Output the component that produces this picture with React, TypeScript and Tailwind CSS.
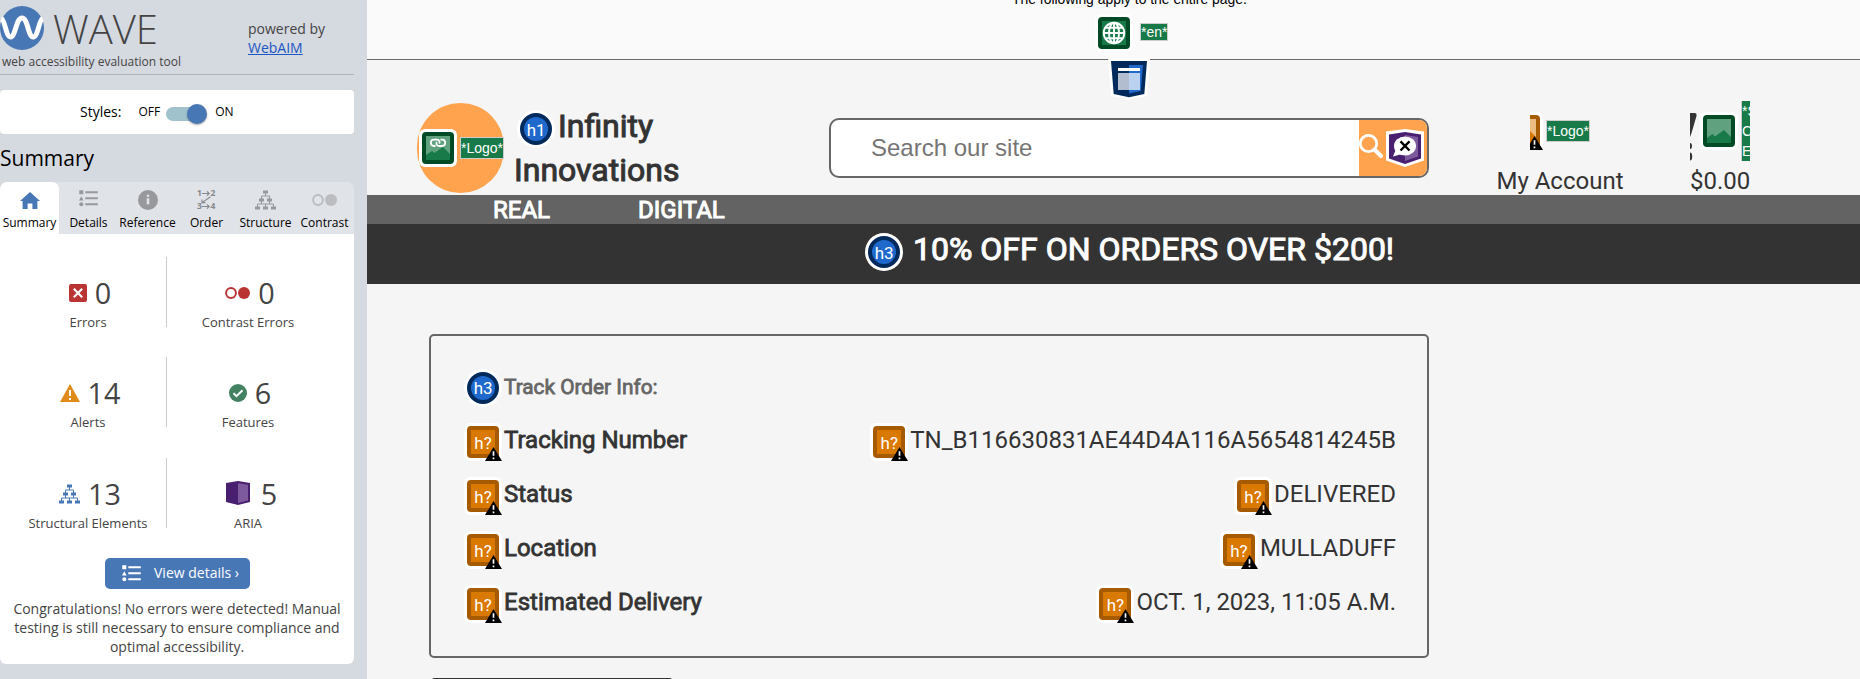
import type { ReactNode } from "react";

/* ---------- shared marker pieces ---------- */

function WarningCorner() {
  return (
    <svg className="absolute right-0 bottom-0 h-[14px] w-[17px]" viewBox="0 0 17 14">
      <path d="M8.5 0L17 14H0z" fill="#000" />
      <path d="M8.5 4.2v4.6M8.5 10.4v1.8" stroke="#fff" strokeWidth="1.7" />
    </svg>
  );
}

function HeadingBadge({ label }: { label: string }) {
  return (
    <div className="size-[38px] shrink-0 rounded-full bg-white p-[3px]">
      <div className="flex size-8 items-center justify-center rounded-full border-4 border-[#002a5c] bg-[#1f69cc] pt-[2px] text-[17px] leading-none font-normal tracking-[-0.3px] text-white [-webkit-text-stroke-width:0px]">
        {label}
      </div>
    </div>
  );
}

function PossibleHeading() {
  return (
    <div className="relative size-[38px] shrink-0 translate-y-[2px] rounded-[6px] bg-white p-[3px]">
      <div className="flex size-8 items-center justify-center rounded-[4px] border-4 border-[#a65b00] bg-[#da7900] pt-[2px] text-[17px] leading-none font-normal text-white [-webkit-text-stroke-width:0px]">
        h?
      </div>
      <WarningCorner />
    </div>
  );
}

function GreenBadge({ children }: { children: ReactNode }) {
  return (
    <div className="size-[38px] shrink-0 rounded-[6px] bg-white p-[3px]">
      <div className="size-8 rounded-[4px] border-4 border-[#004a26] bg-[#177a48]">
        <svg className="size-6" viewBox="0 0 24 24">
          {children}
        </svg>
      </div>
    </div>
  );
}

function AltLabel({ children }: { children: ReactNode }) {
  return (
    <span className="shrink-0 border border-[#ccc] bg-[#177a48] font-['Liberation_Sans',sans-serif] text-sm leading-5 whitespace-nowrap text-white">
      {children}
    </span>
  );
}

/* ---------- sidebar icons ---------- */

function ListIcon({ className }: { className: string }) {
  return (
    <svg className={className} viewBox="0 0 19 17" fill="currentColor">
      <path d="M.3.2h4v4h-4zM2.3 6.2l2.3 4.3H0z" />
      <circle cx="2.3" cy="14.3" r="2" />
      <path d="M6.3 1.2h12.5v2H6.3zM6.3 7.2h12.5v2H6.3zM6.3 13.2h12.5v2H6.3z" />
    </svg>
  );
}

function TreeIcon({ className }: { className: string }) {
  return (
    <svg className={className} viewBox="0 0 21 20">
      <path
        d="M8 .5h5v3H8zM4 8.5h5v3H4zM12 8.5h5v3h-5zM0 16.5h5v3H0zM8 16.5h5v3H8zM16 16.5h5v3h-5z"
        fill="currentColor"
      />
      <path
        d="M10.5 3v3M6.5 9V6h8v3M6.5 11v3M14.5 11v3M2.5 17v-3h16v3M10.5 14v3"
        fill="none"
        stroke="currentColor"
        strokeWidth="1"
      />
    </svg>
  );
}

function CirclesIcon({ className }: { className: string }) {
  return (
    <svg className={className} viewBox="0 0 25 12">
      <circle cx="6" cy="6" r="4.9" fill="none" stroke="currentColor" strokeWidth="2" />
      <circle cx="19" cy="6" r="6" fill="currentColor" />
    </svg>
  );
}

function OrderIcon() {
  return (
    <svg className="h-5 w-[19px]" viewBox="0 0 19 20">
      <g
        fill="currentColor"
        fontFamily="Open Sans, sans-serif"
        fontSize="8.5"
        fontWeight="700"
      >
        <text x="0" y="6.4">1</text>
        <text x="13.5" y="6.4">2</text>
        <text x="0" y="19.4">3</text>
        <text x="13.5" y="19.4">4</text>
      </g>
      <path
        d="M5 3.5h7M10 1.3l2.2 2.2L10 5.7M5 16.5h7M10 14.3l2.2 2.2-2.2 2.2M13.5 6.8L5 12.6M5 9.4v3.2h3.4"
        fill="none"
        stroke="currentColor"
        strokeWidth="1.1"
      />
    </svg>
  );
}

const tabs = [
  {
    name: "Summary",
    icon: (
      <svg className="h-[17px] w-[20px] text-[#4877b6]" viewBox="0 0 20 17" fill="currentColor">
        <path d="M10 0L0 9h2.6v8h5v-5.5h4.8V17h5V9H20z" />
      </svg>
    ),
  },
  { name: "Details", icon: <ListIcon className="mb-1 h-[17px] w-[19px] text-[#97999c]" /> },
  {
    name: "Reference",
    icon: (
      <svg className="size-5" viewBox="0 0 20 20">
        <circle cx="10" cy="10" r="10" fill="#97999c" />
        <circle cx="10" cy="5.8" r="1.3" fill="#e0e3e8" />
        <path d="M8.7 8.3h2.6v6H8.7z" fill="#e0e3e8" />
      </svg>
    ),
  },
  { name: "Order", icon: <span className="text-[#85888b]"><OrderIcon /></span> },
  { name: "Structure", icon: <TreeIcon className="h-5 w-[21px] text-[#97999c]" /> },
  { name: "Contrast", icon: <CirclesIcon className="h-3 w-[25px] text-[#bbbdc1]" /> },
];

const stats = [
  {
    name: "Errors",
    count: 0,
    icon: (
      <svg className="size-[18px]" viewBox="0 0 18 18">
        <rect width="18" height="18" rx="2" fill="#ba3434" />
        <path d="M4.8 4.8l8.4 8.4M13.2 4.8l-8.4 8.4" stroke="#fff" strokeWidth="2.1" />
      </svg>
    ),
  },
  { name: "Contrast Errors", count: 0, icon: <CirclesIcon className="h-3 w-[25px] text-[#ba3434]" /> },
  {
    name: "Alerts",
    count: 14,
    icon: (
      <svg className="h-[18px] w-5" viewBox="0 0 20 18">
        <path d="M10 0l10 18H0z" fill="#e18b1b" />
        <path d="M10 6v6M10 14v2" stroke="#fff" strokeWidth="2" />
      </svg>
    ),
  },
  {
    name: "Features",
    count: 6,
    icon: (
      <svg className="size-[18px]" viewBox="0 0 18 18">
        <circle cx="9" cy="9" r="9" fill="#438261" />
        <path d="M4.5 9.2l3 3 6-6" fill="none" stroke="#fff" strokeWidth="2" />
      </svg>
    ),
  },
  { name: "Structural Elements", count: 13, icon: <TreeIcon className="h-5 w-[21px] text-[#4877b6]" /> },
  {
    name: "ARIA",
    count: 5,
    icon: (
      <svg className="mr-[3px] mb-[2px] ml-[3px] h-6 w-6" viewBox="0 0 24 24">
        <path d="M12 0l12 2v19l-12 3L0 21V2z" fill="#48206f" />
        <path d="M12 2.2l10 1.6v15.6l-10 2.5z" fill="#7d5a9e" />
      </svg>
    ),
  },
];

function Sidebar() {
  return (
    <aside className="h-full w-[367px] shrink-0 bg-[#d5d9e0] pr-[13px] font-['Open_Sans',sans-serif] text-[#444]">
      <header className="flex h-[75px] border-b border-[#b1b5bb]">
        <div className="w-[248px]">
          <div className="flex h-[54px] pt-[6px]">
            <svg className="size-[44px]" viewBox="0 0 44 44">
              <circle cx="22" cy="22" r="22" fill="#4877b6" />
              <path
                d="M1.5 12.5C5 14 6 31 10.5 31C15.5 31 16 12 22 12S28 31 33.2 31C38 31 39 14 42.5 12.5"
                fill="none"
                stroke="#fff"
                strokeWidth="5"
              />
            </svg>
            <span className="pt-[3px] pl-[9px] text-[40px] leading-[40px] font-light">WAVE</span>
          </div>
          <p className="pl-[2px] text-xs leading-4">web accessibility evaluation tool</p>
        </div>
        <p className="pt-[19px] text-sm leading-[19px]">
          powered by
          <br />
          <a className="text-[#1a56c4] underline">WebAIM</a>
        </p>
      </header>

      <div className="mt-[15px] flex h-[44px] items-center rounded-[4px] bg-white pl-20 text-black">
        <span className="text-sm">Styles:</span>
        <span className="pl-[17px] text-xs">OFF</span>
        <span className="relative mt-[3px] ml-[6px] h-[14px] w-[41px]">
          <span className="block h-[14px] w-[36px] rounded-full bg-[#a0c2cc]" />
          <span className="absolute top-[-3px] right-0 size-5 rounded-full bg-[#4877b6] shadow-[0_1px_2px_rgba(0,0,0,0.35)]" />
        </span>
        <span className="pl-2 text-xs">ON</span>
      </div>

      <h2 className="pt-3 text-[21px] leading-6 text-black">Summary</h2>

      <nav className="mt-3 grid h-[52px] grid-cols-6 rounded-t-[7px] bg-[#e0e3e8] text-black">
        {tabs.map((tab, i) => (
          <div
            key={tab.name}
            className={
              i === 0
                ? "flex flex-col items-center rounded-t-[7px] bg-white"
                : "flex flex-col items-center"
            }
          >
            <span className="flex h-[33px] items-center pt-[3px]">{tab.icon}</span>
            <span className="text-xs leading-4">{tab.name}</span>
          </div>
        ))}
      </nav>

      <section className="h-[430px] rounded-b-[6px] bg-white pt-[23px]">
        <div className="grid grid-cols-[167px_163px] gap-y-[30.3px]">
          {stats.map((s, i) => (
            <div
              key={s.name}
              className={
                i % 2 === 0
                  ? "flex h-[70px] flex-col items-center border-r border-[#ccc] pt-4 pl-[10px]"
                  : "flex h-[70px] flex-col items-center pt-4 pr-px"
              }
            >
              <div className="flex h-10 items-center gap-2 pl-1">
                {s.icon}
                <span className="text-[28.8px] leading-10">{s.count}</span>
              </div>
              <span className="mt-px text-[13px] leading-4 whitespace-nowrap">{s.name}</span>
            </div>
          ))}
        </div>
        <a className="mt-[30px] ml-[105px] flex h-[31px] w-[145px] items-center rounded-[5px] bg-[#4877b6] pl-[17px] text-sm text-white">
          <ListIcon className="h-[17px] w-[19px]" />
          <span className="pl-[13px]">View details ›</span>
        </a>
        <p className="pt-[10px] text-center text-sm leading-[19px]">
          Congratulations! No errors were detected! Manual
          <br />
          testing is still necessary to ensure compliance and
          <br />
          optimal accessibility.
        </p>
      </section>
    </aside>
  );
}

/* ---------- page being evaluated ---------- */

function PageBar() {
  return (
    <div className="relative flow-root h-[60px] border-b border-[#6a6a6a] bg-[#fafafa] font-['Liberation_Sans',sans-serif] text-sm text-black">
      <p className="-mt-[9px] pl-[645px] text-[13.9px] leading-4">The following apply to the entire page.</p>
      <div className="flex items-center pt-[7px] pl-[728px]">
        <GreenBadge>
          <g fill="none" stroke="#fff" strokeWidth="1.9">
            <circle cx="12" cy="12" r="10.3" />
            <ellipse cx="12" cy="12" rx="5" ry="10.3" />
            <path d="M12 1.5v21M1.7 12h20.6M3.5 6.8h17M3.5 17.2h17" />
          </g>
        </GreenBadge>
        <span className="mb-[2px] ml-[7px] border border-[#ccc] bg-[#177a48] leading-4 text-white">*en*</span>
      </div>
      <svg className="absolute top-[58px] left-[740px] h-[43px] w-[43px]" viewBox="0 0 43 43">
        <path d="M1 0h42l-3 38-18 4-18-4z" fill="#fff" />
        <path d="M4 3h36l-2.7 33L22 39.3 6.7 36z" fill="#002a5c" />
        <path d="M22 7h14l-2.2 26L22 35.5z" fill="#1f69cc" />
        <path d="M11 10h22v3H11z" fill="#fff" />
        <path d="M11 15h11v17H11z" fill="#b2becf" />
        <path d="M22 15h11v17H22z" fill="#bbd1f0" />
      </svg>
    </div>
  );
}

function SiteHeader() {
  return (
    <header className="flex h-[135px] items-start pl-[50px]">
      <div className="mt-[43px] w-[87px] overflow-hidden">
        <div className="flex h-[90px] w-[87px] items-center rounded-full bg-[#ffa34f]">
          <div className="pl-[2px]">
            <GreenBadge>
              <rect width="24" height="24" fill="#60a280" />
              <path d="M0 19l6-4 2.5 2L17 11l7 7v6H0z" fill="#177a48" />
              <g fill="none" stroke="#fff" strokeWidth="1.8">
                <path d="M9.5 10H8a3.2 3.2 0 0 1 0-6.4h3a2.6 2.6 0 0 1 2.200 4" />
                <path d="M14.5 3.6H16a3.2 3.2 0 0 1 0 6.4h-3a2.6 2.6 0 0 1-2.200-4" />
              </g>
            </GreenBadge>
          </div>
          <div className="ml-[3px] w-[44px] shrink-0 overflow-hidden">
            <div className="flex">
              <AltLabel>*Logo*</AltLabel>
            </div>
          </div>
        </div>
      </div>

      <h1 className="mt-[44px] ml-[10px] w-[315px] text-[32px] leading-[44px] font-normal [-webkit-text-stroke-width:1px]">
        <span className="flex h-[44px] items-center gap-[3px] pl-[3px]">
          <span className="mt-[6px] block">
            <HeadingBadge label="h1" />
          </span>
          Infinity
        </span>
        Innovations
      </h1>

      <div className="mt-[58px] flex h-[60px] w-[600px] items-stretch overflow-hidden rounded-[10px] border-2 border-[#666] bg-white">
        <span className="flex-1 pl-10 font-['Liberation_Sans',sans-serif] text-2xl leading-[55px] text-[#757575]">
          Search our site
        </span>
        <div className="flex w-[68px] items-center bg-[#ffa34f]">
          <svg className="mb-1 h-6 w-6" viewBox="0 0 24 24">
            <circle cx="9.5" cy="9.5" r="8.2" fill="none" stroke="#fff" strokeWidth="2.8" />
            <path d="M15.5 15.5l6.5 6.5" stroke="#fff" strokeWidth="4" strokeLinecap="round" />
          </svg>
          <svg className="ml-[3px] h-[38px] w-[38px]" viewBox="0 0 38 38">
            <path d="M19 0l19 2.5v29L19 38 0 31.5v-29z" fill="#fff" />
            <path d="M19 3l16 2.5v24L19 35 3 29.5v-24z" fill="#48206f" />
            <path d="M19 6l13 2v19.5L19 32z" fill="#7d5a9e" />
            <ellipse cx="19" cy="17" rx="11" ry="9.5" fill="#fff" />
            <path d="M10 20l-3 7.5 9-2.5z" fill="#fff" />
            <path d="M14.5 12.3l9 9.2M23.5 12.3l-9 9.2" stroke="#000" strokeWidth="2.4" />
          </svg>
        </div>
      </div>

      <div className="ml-[66px] flex w-[130px] flex-col items-center pt-[52px]">
        <div className="flex h-[38px] items-center self-start pl-[35px]">
          <div className="flex w-[13px] justify-end overflow-hidden">
            <div className="relative size-[38px] shrink-0 rounded-[6px] bg-white p-[3px]">
              <div className="size-8 rounded-[4px] border-4 border-[#a65b00] bg-[#da7900]">
                <svg className="size-6" viewBox="0 0 24 24">
                  <path d="M0 0h24v18l-7-7-9 6L6 15l-6 4z" fill="#ecbc80" />
                </svg>
              </div>
              <WarningCorner />
            </div>
          </div>
          <div className="ml-[3px] flex">
            <AltLabel>*Logo*</AltLabel>
          </div>
        </div>
        <span className="mt-[17px] text-2xl leading-7">My Account</span>
      </div>

      <div className="ml-[64px] pt-[41px]">
        <div className="flex h-[60px] w-[61px] items-start overflow-hidden pl-px">
          <svg className="mt-3 h-[48px] w-[7px] shrink-0" viewBox="0 0 7 48" fill="#333">
            <path d="M0 0h4.5Q7 0 6.5 3L1.5 20 0 24z" />
            <ellipse cx="0" cy="33" rx="2" ry="3" />
            <ellipse cx="0" cy="43.5" rx="2.2" ry="4" />
          </svg>
          <div className="mt-[11px] ml-[3px]">
            <GreenBadge>
              <rect width="24" height="24" fill="#60a280" />
              <path d="M0 19l5.5-4 2.5 2.5L17 11l7 7v6H0z" fill="#177a48" />
            </GreenBadge>
          </div>
          <div className="ml-[3px] w-[9px] shrink-0 overflow-hidden border-l border-[#ccc] bg-[#177a48] font-['Liberation_Sans',sans-serif] text-sm leading-5 whitespace-nowrap text-white">
            *S
            <br />C
            <br />E
          </div>
        </div>
        <span className="mt-[6px] block pl-px text-2xl leading-7">$0.00</span>
      </div>
    </header>
  );
}

const rows = [
  ["Tracking Number", "TN_B116630831AE44D4A116A5654814245B"],
  ["Status", "DELIVERED"],
  ["Location", "MULLADUFF"],
  ["Estimated Delivery", "OCT. 1, 2023, 11:05 A.M."],
];

function OrderCard() {
  return (
    <section className="mt-[50px] ml-[62px] h-[324px] w-[1000px] rounded-[5px] border-2 border-[#666] pt-6 pr-[31px] pl-[33px]">
      <h3 className="flex h-[53px] items-center gap-[2px] pt-[2px] text-[20.8px] text-[#666] [-webkit-text-stroke-width:0.8px]">
        <HeadingBadge label="h3" />
        Track Order Info:
      </h3>
      {rows.map(([name, value]) => (
        <div key={name} className="flex h-[54px] items-center justify-between text-2xl">
          <span className="flex items-center gap-[2px] [-webkit-text-stroke-width:0.8px]">
            <PossibleHeading />
            {name}
          </span>
          <span className="flex items-center gap-[2px]">
            <PossibleHeading />
            {value}
          </span>
        </div>
      ))}
    </section>
  );
}

export default function App() {
  return (
    <div className="flex h-[679px] w-full overflow-hidden">
      <Sidebar />
      <main className="flex-1 overflow-hidden bg-[#f5f5f5] font-['Roboto',sans-serif] text-[#333]">
        <PageBar />
        <SiteHeader />
        <nav className="flex h-[29px] bg-[#636363] pl-[126px] text-2xl leading-[30px] text-white [-webkit-text-stroke-width:1px]">
          <span className="w-[145px]">REAL</span>
          <span>DIGITAL</span>
        </nav>
        <h3 className="flex h-[60px] bg-[#333] pl-[498px] text-[32px] leading-[50px] text-white [-webkit-text-stroke-width:1px]">
          <span className="mt-[9px] mr-[10px]">
            <HeadingBadge label="h3" />
          </span>
          10% OFF ON ORDERS OVER $200!
        </h3>
        <OrderCard />
        <div className="mt-5 ml-[64px] h-10 w-[242px] rounded-[4px] bg-[#333]" />
      </main>
    </div>
  );
}
